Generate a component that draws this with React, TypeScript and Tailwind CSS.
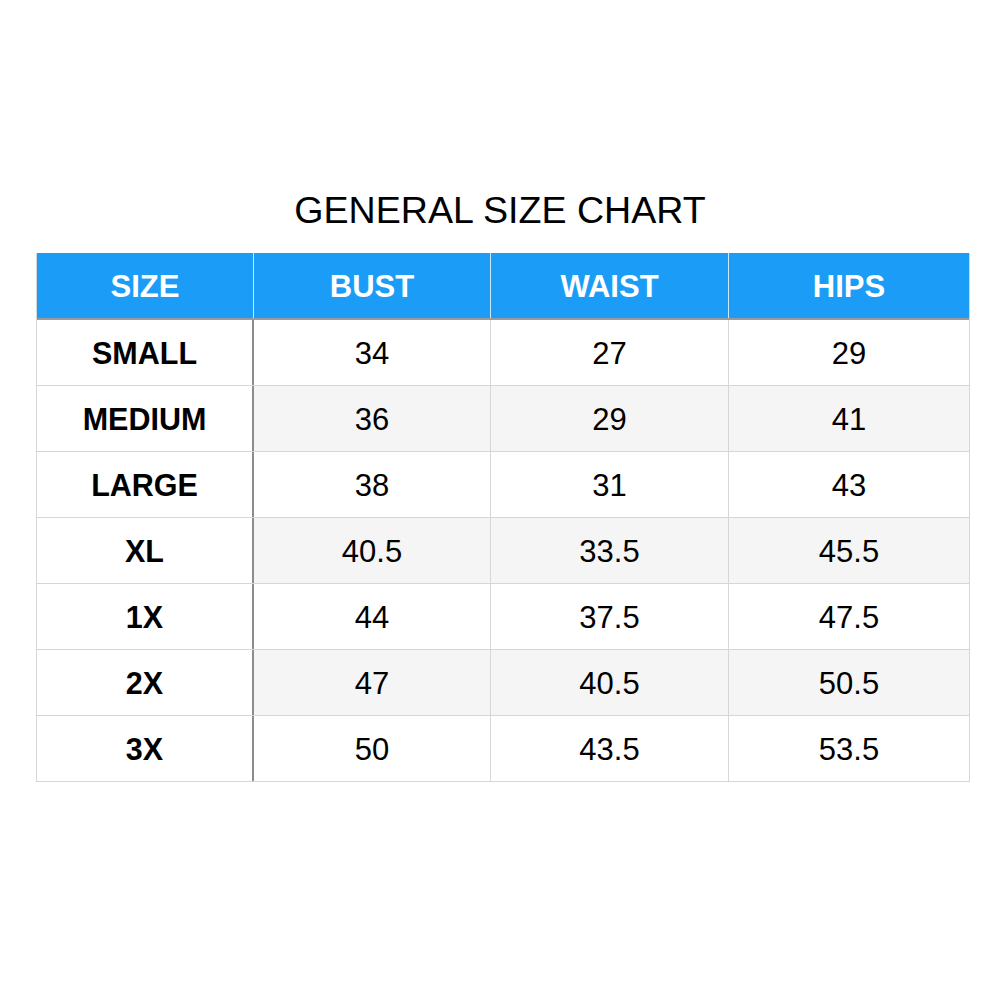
const rows = [
  ['SMALL', '34', '27', '29'],
  ['MEDIUM', '36', '29', '41'],
  ['LARGE', '38', '31', '43'],
  ['XL', '40.5', '33.5', '45.5'],
  ['1X', '44', '37.5', '47.5'],
  ['2X', '47', '40.5', '50.5'],
  ['3X', '50', '43.5', '53.5'],
];

const headers = ['SIZE', 'BUST', 'WAIST', 'HIPS'];

const App = () => {
  return (
    <main className="min-h-screen w-[1000px] bg-white font-['Liberation_Sans',Arial,sans-serif] text-black">
      <div className="pt-[188px]">
        <h1 className="h-[44px] text-center text-[37.6px] font-normal leading-[44px]">
          GENERAL SIZE CHART
        </h1>

        <div className="ml-[36px] mt-[21px] w-[934px] border-l border-r border-[#d6d6d6]">
          <div className="grid h-[67px] grid-cols-[217px_237px_238px_1fr] border-b-2 border-[#9a9a9a] bg-[#1b9df7] text-[31px] font-bold text-white">
            {headers.map((h, i) => (
              <div
                key={h}
                className={`flex items-center justify-center pt-[3px] ${i < 3 ? 'border-r border-[#cde9fc]' : ''}`}
              >
                {h}
              </div>
            ))}
          </div>

          {rows.map((row, r) => (
            <div
              key={row[0]}
              className="grid h-[66px] grid-cols-[217px_237px_238px_1fr] border-b border-[#d6d6d6]"
            >
              {row.map((cell, i) => (
                <div
                  key={i}
                  className={
                    i === 0
                      ? 'flex items-center justify-center border-r-2 border-[#8c8c8c] bg-white pt-[3px] text-[30.5px] font-bold'
                      : `flex items-center justify-center pt-[3px] text-[31px] ${i < 3 ? 'border-r border-[#d6d6d6]' : ''} ${r % 2 === 1 ? 'bg-[#f5f5f5]' : 'bg-white'}`
                  }
                >
                  {cell}
                </div>
              ))}
            </div>
          ))}
        </div>
      </div>
    </main>
  );
};

export default App;
